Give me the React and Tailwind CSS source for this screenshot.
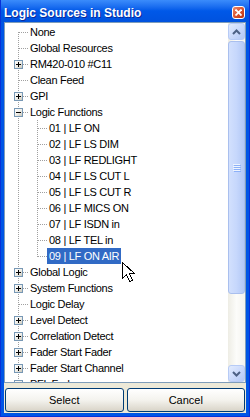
import React from "react";

const LINE = "#A0A0A0";

const items = [
  { label: "None", level: 0, vert: "bottom" },
  { label: "Global Resources", level: 0 },
  { label: "RM420-010 #C11", level: 0, exp: "plus" },
  { label: "Clean Feed", level: 0 },
  { label: "GPI", level: 0, exp: "plus" },
  { label: "Logic Functions", level: 0, exp: "minus" },
  { label: "01 | LF ON", level: 1 },
  { label: "02 | LF LS DIM", level: 1 },
  { label: "03 | LF REDLIGHT", level: 1 },
  { label: "04 | LF LS CUT L", level: 1 },
  { label: "05 | LF LS CUT R", level: 1 },
  { label: "06 | LF MICS ON", level: 1 },
  { label: "07 | LF ISDN in", level: 1 },
  { label: "08 | LF TEL in", level: 1 },
  { label: "09 | LF ON AIR", level: 1, vert: "top", selected: true },
  { label: "Global Logic", level: 0, exp: "plus" },
  { label: "System Functions", level: 0, exp: "plus" },
  { label: "Logic Delay", level: 0 },
  { label: "Level Detect", level: 0, exp: "plus" },
  { label: "Correlation Detect", level: 0, exp: "plus" },
  { label: "Fader Start Fader", level: 0, exp: "plus" },
  { label: "Fader Start Channel", level: 0, exp: "plus" },
  { label: "PFL Fader", level: 0, exp: "plus" },
];

function PassCell() {
  return (
    <svg width="19" height="16" className="block shrink-0" shapeRendering="crispEdges">
      <line x1="9.5" y1="0" x2="9.5" y2="16" stroke={LINE} strokeDasharray="1 1" />
    </svg>
  );
}

function ConnCell({ vert = "full", exp, id }) {
  const y1 = vert === "bottom" ? 8 : 0;
  const y2 = vert === "top" ? 9 : 16;
  return (
    <svg width="19" height="16" className="block shrink-0" shapeRendering="crispEdges">
      <defs>
        <linearGradient id={id} x1="0" y1="0" x2="1" y2="1">
          <stop offset="0" stopColor="#FFFFFF" />
          <stop offset="0.5" stopColor="#F0EFEA" />
          <stop offset="1" stopColor="#C4C2B4" />
        </linearGradient>
      </defs>
      <line x1="9.5" y1={y1} x2="9.5" y2={y2} stroke={LINE} strokeDasharray="1 1" />
      <line x1={exp ? 14 : 10} y1="8.5" x2="19" y2="8.5" stroke={LINE} strokeDasharray="1 1" />
      {exp && (
        <g>
          <rect x="5.5" y="4.5" width="8" height="8" fill={`url(#${id})`} stroke="#7898B5" />
          <line x1="7" y1="8.5" x2="12" y2="8.5" stroke="#000" />
          {exp === "plus" && <line x1="9.5" y1="6" x2="9.5" y2="11" stroke="#000" />}
        </g>
      )}
    </svg>
  );
}

function Row({ item, idx }) {
  return (
    <div className="flex h-[16px] items-center">
      {item.level === 1 && <PassCell />}
      <ConnCell vert={item.vert} exp={item.exp} id={`eg${idx}`} />
      <div
        className={
          item.selected
            ? "h-[16px] px-[2px] bg-[#316AC5] text-white text-[11px] leading-[16px] tracking-[-0.3px] whitespace-nowrap"
            : "h-[16px] px-[2px] text-black text-[11px] leading-[16px] tracking-[-0.3px] whitespace-nowrap"
        }
      >
        {item.label}
      </div>
    </div>
  );
}

function ScrollBtn({ dir }) {
  return (
    <div className="h-[17px] w-[17px] rounded-[3px] border border-[#B7CBF6] bg-gradient-to-br from-[#E3ECFE] via-[#CBDAFC] to-[#B3C8F5] flex items-center justify-center">
      <svg width="9" height="6" viewBox="0 0 9 6">
        {dir === "up" ? (
          <polyline points="1,5 4.5,1.5 8,5" fill="none" stroke="#4D6185" strokeWidth="2" />
        ) : (
          <polyline points="1,1 4.5,4.5 8,1" fill="none" stroke="#4D6185" strokeWidth="2" />
        )}
      </svg>
    </div>
  );
}

function Scrollbar() {
  return (
    <div className="w-[17px] shrink-0 flex flex-col bg-gradient-to-r from-[#EEEDE5] via-[#FCFCFA] to-[#F4F3EE]">
      <ScrollBtn dir="up" />
      <div className="mt-[1px] h-[253px] rounded-[3px] border border-[#A9BFEE] bg-gradient-to-r from-[#D2E0FD] via-[#C6D7FC] to-[#B3C9F6] flex items-center justify-center">
        <svg width="8" height="8" shapeRendering="crispEdges">
          {[0, 2, 4, 6].map((y) => (
            <g key={y}>
              <line x1="0" y1={y + 0.5} x2="7" y2={y + 0.5} stroke="#EEF4FE" />
              <line x1="1" y1={y + 1.5} x2="8" y2={y + 1.5} stroke="#8CB0F8" />
            </g>
          ))}
        </svg>
      </div>
      <div className="flex-1" />
      <ScrollBtn dir="down" />
    </div>
  );
}

function XPButton({ children }) {
  return (
    <div className="flex-1 h-[24px] rounded-[3px] border border-[#003C74] bg-gradient-to-b from-[#FFFFFF] via-[#F4F3EE] to-[#D9D4C8] flex items-center justify-center text-[11px] text-black">
      {children}
    </div>
  );
}

export default function App() {
  return (
    <div className="relative w-[250px] h-[417px] flex flex-col overflow-hidden bg-[#0055E5] border-l border-r border-b border-[#0831D9] font-['Liberation_Sans',Arial,sans-serif]">
      <div className="h-[22px] shrink-0 flex items-center justify-between pl-[3px] pr-[4px] pt-[3px] bg-gradient-to-b from-[#3B8CFB] via-[#0058E8] to-[#0052DE]">
        <div className="text-white font-bold text-[12px] [text-shadow:1px_1px_0_#0A2A9C]">
          Logic Sources in Studio
        </div>
        <div className="w-[13px] h-[13px] rounded-[3px] border border-white bg-gradient-to-br from-[#EA8A6A] via-[#D9532F] to-[#B83210] flex items-center justify-center">
          <svg width="7" height="7" viewBox="0 0 7 7">
            <line x1="0.5" y1="0.5" x2="6.5" y2="6.5" stroke="#fff" strokeWidth="1.8" />
            <line x1="6.5" y1="0.5" x2="0.5" y2="6.5" stroke="#fff" strokeWidth="1.8" />
          </svg>
        </div>
      </div>
      <div className="flex-1 flex flex-col px-[3px] pb-[3px]">
        <div className="flex-1 flex flex-col bg-[#ECE9D8]">
          <div className="h-[361px] shrink-0 flex border border-[#7F9DB9] bg-white">
            <div className="flex-1 overflow-hidden pt-[1px] pl-[4px]">
              {items.map((it, i) => (
                <Row key={i} item={it} idx={i} />
              ))}
            </div>
            <Scrollbar />
          </div>
          <div className="mt-[5px] flex gap-[3px] px-[1px] pb-[1px]">
            <XPButton>Select</XPButton>
            <XPButton>Cancel</XPButton>
          </div>
        </div>
      </div>
      <svg
        className="absolute left-[121px] top-[262px]"
        width="13"
        height="21"
        viewBox="0 0 13 21"
        shapeRendering="crispEdges"
      >
        <path
          d="M0.5,0.5 L0.5,16.5 L4.5,12.5 L7.5,19.5 L10.5,18.5 L7.5,11.5 L12.5,11.5 Z"
          fill="#fff"
          stroke="#000"
          strokeLinejoin="miter"
        />
      </svg>
    </div>
  );
}
